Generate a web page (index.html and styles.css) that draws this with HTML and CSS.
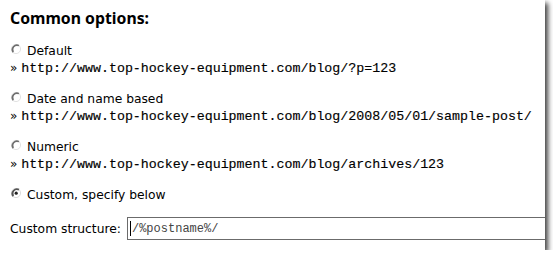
FILE: index.html
```html
<!DOCTYPE html>
<html>
<head>
<meta charset="utf-8">
<link rel="stylesheet" href="styles.css">
</head>
<body>
<div class="panel">
  <h3 class="title">Common options:</h3>
  <div class="option">
    <label class="choice"><svg class="radio" viewBox="0 0 12 12" width="12" height="12"><circle cx="6" cy="6" r="4.6" fill="none" stroke="#e2e2e2" stroke-width="1"/><path d="M3.2 9.3 A4.6 4.6 0 0 1 9 2.6" fill="none" stroke="#6e6e6e" stroke-width="1.6"/></svg>Default</label>
    <div class="url">» <code>http://www.top-hockey-equipment.com/blog/?p=123</code></div>
  </div>
  <div class="option">
    <label class="choice"><svg class="radio" viewBox="0 0 12 12" width="12" height="12"><circle cx="6" cy="6" r="4.6" fill="none" stroke="#e2e2e2" stroke-width="1"/><path d="M3.2 9.3 A4.6 4.6 0 0 1 9 2.6" fill="none" stroke="#6e6e6e" stroke-width="1.6"/></svg>Date and name based</label>
    <div class="url">» <code>http://www.top-hockey-equipment.com/blog/2008/05/01/sample-post/</code></div>
  </div>
  <div class="option">
    <label class="choice"><svg class="radio" viewBox="0 0 12 12" width="12" height="12"><circle cx="6" cy="6" r="4.6" fill="none" stroke="#e2e2e2" stroke-width="1"/><path d="M3.2 9.3 A4.6 4.6 0 0 1 9 2.6" fill="none" stroke="#6e6e6e" stroke-width="1.6"/></svg>Numeric</label>
    <div class="url">» <code>http://www.top-hockey-equipment.com/blog/archives/123</code></div>
  </div>
  <div class="option">
    <label class="choice"><svg class="radio" viewBox="0 0 12 12" width="12" height="12"><circle cx="6" cy="6" r="4.6" fill="none" stroke="#dcdcdc" stroke-width="1"/><path d="M3.2 9.3 A4.6 4.6 0 0 1 9 2.6" fill="none" stroke="#555" stroke-width="1.8"/><circle cx="6.2" cy="6.2" r="1.6" fill="#222"/></svg>Custom, specify below</label>
  </div>
  <div class="custom">
    <span class="label">Custom structure:</span>
    <div class="field"><span class="caret"></span>/%postname%/</div>
  </div>
</div>
</body>
</html>
```
FILE: styles.css
```css
html, body {
  margin: 0;
  padding: 0;
  background: #fff;
}
.panel {
  width: 545px;
  height: 250px;
  background: #fff;
  box-shadow: 3px 3px 5px rgba(0,0,0,0.75);
  overflow: hidden;
  box-sizing: border-box;
  padding: 8px 0 0 10px;
  font-family: "DejaVu Sans", Verdana, sans-serif;
  color: #000;
}
.title {
  margin: 0;
  font-family: "Noto Sans", "DejaVu Sans", sans-serif;
  font-size: 15.8px;
  font-weight: bold;
  line-height: 20px;
  height: 35px;
}
.option {
  height: 48px;
}
.choice {
  display: flex;
  align-items: center;
  font-size: 12.3px;
  line-height: 17px;
  height: 17px;
}
.radio {
  width: 12px;
  height: 12px;
  margin: 0 5px 0 0;
  flex: none;
  position: relative;
  top: -3px;
}
.url {
  font-family: "DejaVu Sans", sans-serif;
  font-size: 12px;
  line-height: 17px;
  height: 17px;
  white-space: nowrap;
}
.url code {
  font-family: "Liberation Mono", "Courier New", monospace;
  font-size: 13.3px;
  color: #000;
  -webkit-text-stroke: 0.15px #000;
}
.custom {
  display: flex;
  align-items: center;
  margin-top: -18px;
  height: 23px;
}
.label {
  font-size: 12.3px;
  margin-right: 6px;
}
.field {
  flex: 1;
  height: 23px;
  box-sizing: border-box;
  border: 1px solid #6b6b6b;
  border-right: none;
  display: flex;
  align-items: center;
  padding-left: 2px;
  font-family: "Liberation Mono", "Courier New", monospace;
  font-size: 12px;
  color: #444;
}
.caret {
  display: inline-block;
  width: 1px;
  height: 15px;
  background: #000;
  margin-right: 1px;
}
```
